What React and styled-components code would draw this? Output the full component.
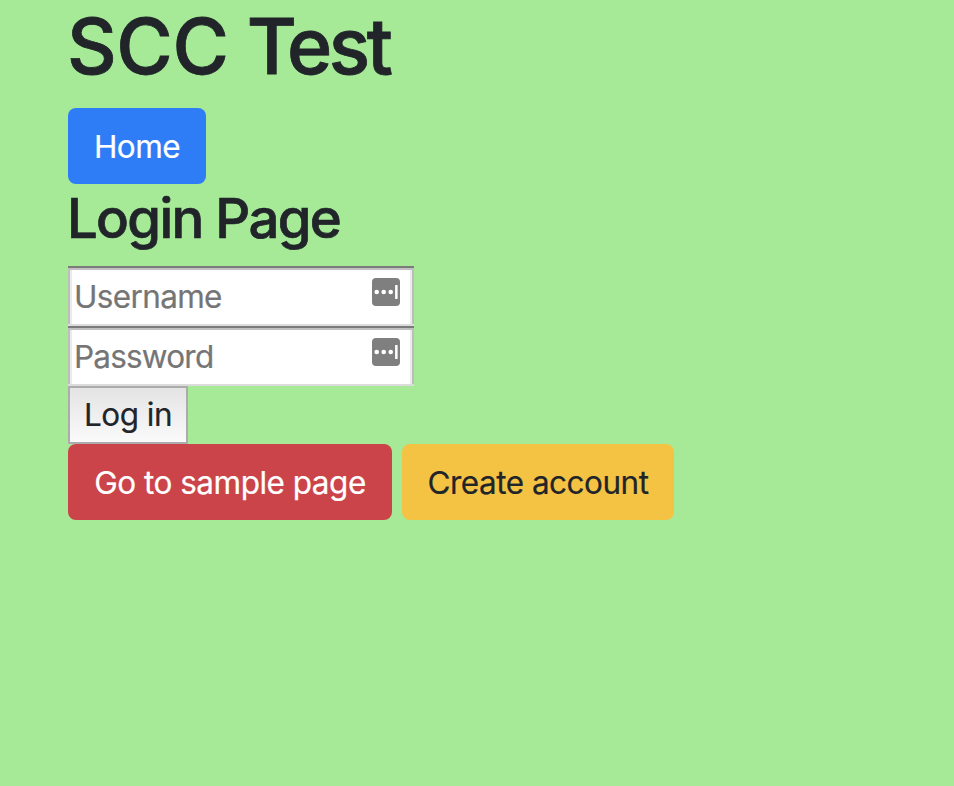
import React from "react";
import styled, { createGlobalStyle } from "styled-components";

const GlobalStyle = createGlobalStyle`
  * { box-sizing: border-box; }
  body { margin: 0; background: #a6ea98; color: #212529; font-family: Inter, "Liberation Sans", sans-serif; font-size: 31.5px; }
`;
const Page = styled.main`
  min-height: 786px;
  padding-left: 68px;
`;
const Title = styled.h1`
  margin: 0 0 0 -1px;
  height: 108px;
  font-size: 77px;
  font-weight: 500;
  line-height: 92px;
  letter-spacing: -0.4px;
  word-spacing: -2px;
  -webkit-text-stroke: 0.8px currentColor;
  white-space: nowrap;
`;
const Tight = styled.span`
  letter-spacing: ${(p) => p.$spacing}px;
`;
const Subtitle = styled.h2`
  margin: 0 0 0 -1px;
  height: 82px;
  font-size: 54.5px;
  font-weight: 500;
  line-height: 69px;
  letter-spacing: -1.7px;
  -webkit-text-stroke: 0.7px currentColor;
  white-space: nowrap;
`;
const Button = styled.button`
  display: block;
  width: ${(p) => p.$width}px;
  height: 76px;
  padding: 1px 0 0;
  border: 0;
  border-radius: 8px;
  background: ${(p) => p.$bg};
  color: ${(p) => p.$color || "#fff"};
  font: inherit;
  -webkit-text-stroke: 0.2px currentColor;
  letter-spacing: ${(p) => p.$spacing || "-0.5px"};
  white-space: nowrap;
`;
const Form = styled.form`
  display: flex;
  flex-direction: column;
  align-items: flex-start;
`;
const Field = styled.label`
  display: flex;
  align-items: center;
  justify-content: space-between;
  width: 346px;
  height: 60px;
  padding: 2px 14px 2px 6px;
  background: #fff;
  box-shadow:
    inset 0 2px #7b7b7b,
    inset 0 4px #c0c0c0,
    inset 0 -2px #dcdcdc,
    inset 2px 0 #bdbdbd,
    inset -2px 0 #bdbdbd,
    inset 4px 0 #ebebeb,
    inset -4px 0 #ebebeb;
`;
const Input = styled.input`
  width: 280px;
  height: 54px;
  padding: 1px 0 0;
  border: 0;
  outline: 0;
  background: transparent;
  font: inherit;
  letter-spacing: ${(p) => p.$spacing}px;
  &::placeholder { color: #757575; opacity: 1; -webkit-text-stroke: 0.2px #757575; }
`;
const KeyIcon = styled.svg`
  width: 28px;
  height: 28px;
  margin-bottom: 8px;
`;
const Submit = styled.button`
  width: 120px;
  height: 58px;
  padding: 0 0 1px;
  border: 2px solid #acacac;
  background: linear-gradient(#e4e4e4, #fafafa);
  color: #212529;
  font: inherit;
  letter-spacing: -0.5px;
  -webkit-text-stroke: 0.2px currentColor;
`;
const Actions = styled.div`
  display: flex;
  gap: 10px;
`;

function CredentialField({ type, label, spacing }) {
  return (
    <Field>
      <Input type={type} placeholder={label} aria-label={label} $spacing={spacing} />
      <KeyIcon viewBox="0 0 28 28" aria-hidden="true">
        <rect width="28" height="28" rx="4" fill="#7f7f7f" />
        <g fill="#fff">
          <circle cx="4.7" cy="14" r="2.3" />
          <circle cx="11.7" cy="14" r="2.3" />
          <circle cx="18.7" cy="14" r="2.3" />
          <rect x="23.1" y="7" width="2.5" height="14" rx="0.6" />
        </g>
      </KeyIcon>
    </Field>
  );
}

export default function App() {
  return (
    <Page>
      <GlobalStyle />
      <Title>
        SCC <Tight $spacing={-10}>T</Tight><Tight $spacing={-3.4}>est</Tight>
      </Title>
      <Button $bg="#2f7df6" $width={138} $spacing="-0.6px">Home</Button>
      <Subtitle>Login Page</Subtitle>
      <Form onSubmit={(e) => e.preventDefault()}>
        <CredentialField type="text" label="Username" spacing={-0.65} />
        <CredentialField type="password" label="Password" spacing={-0.8} />
        <Submit type="submit">Log in</Submit>
      </Form>
      <Actions>
        <Button $bg="#cb444a" $width={324}>Go to sample page</Button>
        <Button $bg="#f5c344" $color="#212529" $width={272}>Create account</Button>
      </Actions>
    </Page>
  );
}
